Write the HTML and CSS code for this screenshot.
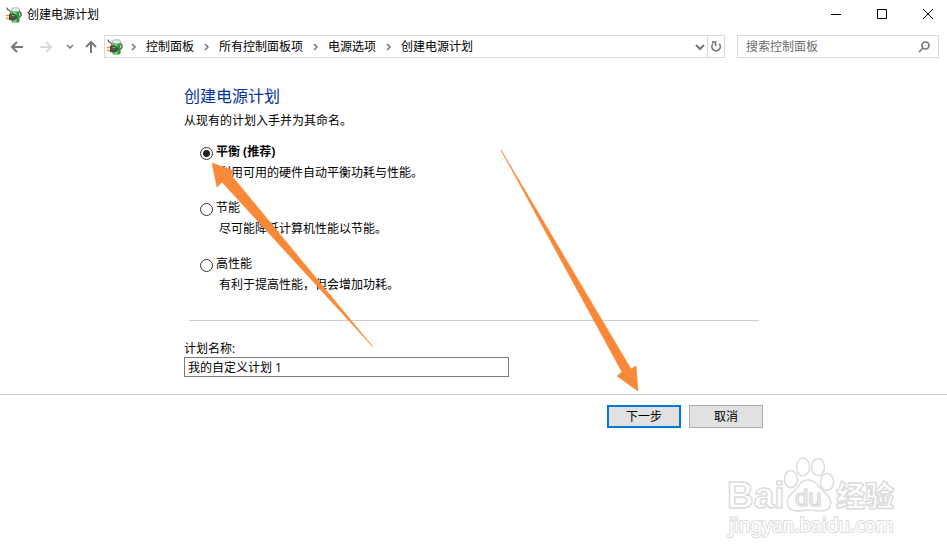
FILE: index.html
```html
<!DOCTYPE html>
<html lang="zh-CN">
<head>
    <meta charset="UTF-8">
    <meta name="viewport" content="width=device-width, initial-scale=1.0">
    <title>创建电源计划</title>
    <link rel="stylesheet" href="styles.css">
</head>
<body>
    <svg class="symbols" aria-hidden="true">
        <symbol id="power" viewBox="0 0 16 16">
            <path d="M1 .5 Q1 3 3.5 3.5 Q5 4.5 5 8" fill="none" stroke="#666" stroke-width="1.2"/>
            <path d="M13 4.5 Q15.5 5 15 8.5 L13 11" fill="none" stroke="#444" stroke-width="1.2"/>
            <rect x="5.5" y="2" width="8" height="13.5" rx="1.5" fill="#2f9a3c"/>
            <rect x="5.5" y=".8" width="8" height="4" rx="2" fill="#e4ebe6" stroke="#8a968e" stroke-width=".6"/>
            <path d="M7 5 H10.5 V15 H7Z" fill="#5ddb62"/>
            <path d="M0 8.5 H4 M0 11.5 H4" stroke="#e3a01b" stroke-width="1.4"/>
            <path d="M3.5 7.2 H6 Q10.5 7 10.5 10 Q10.5 13 6 12.8 H3.5Z" fill="#505050" stroke="#2a2a2a" stroke-width=".7"/>
            <path d="M5.5 8.6 H8.5" stroke="#aaa"/>
        </symbol>
        <symbol id="chevron" viewBox="0 0 7 8">
            <path d="M2 1 L5 4 L2 7" fill="none" stroke="#777" stroke-width="1.5"/>
        </symbol>
    </svg>

    <header class="titlebar">
        <svg class="app-icon"><use href="#power"/></svg>
        <span class="title">创建电源计划</span>
        <div class="window-buttons">
            <button type="button" aria-label="最小化"><svg viewBox="0 0 12 12"><path d="M1 5.5 H11"/></svg></button>
            <button type="button" aria-label="最大化"><svg viewBox="0 0 12 12"><path d="M1.5 .5 H10.5 V9.5 H1.5Z"/></svg></button>
            <button type="button" aria-label="关闭"><svg viewBox="0 0 12 12"><path d="M1 0 L11 10 M11 0 L1 10"/></svg></button>
        </div>
    </header>

    <nav class="toolbar">
        <div class="history">
            <button type="button" aria-label="后退"><svg viewBox="0 0 14 14"><path d="M13 7 H2 M7 2 L2 7 L7 12"/></svg></button>
            <button type="button" class="disabled" aria-label="前进"><svg viewBox="0 0 14 14"><path d="M1 7 H12 M7 2 L12 7 L7 12"/></svg></button>
            <button type="button" class="recent" aria-label="最近位置"><svg viewBox="0 0 8 8"><path d="M1 2 L4 5 L7 2"/></svg></button>
            <button type="button" aria-label="上移"><svg viewBox="0 0 14 14"><path d="M7 13 V2 M2 7 L7 2 L12 7"/></svg></button>
        </div>
        <div class="address">
            <svg class="app-icon"><use href="#power"/></svg>
            <svg class="chevron"><use href="#chevron"/></svg>
            <a href="#">控制面板</a>
            <svg class="chevron"><use href="#chevron"/></svg>
            <a href="#">所有控制面板项</a>
            <svg class="chevron"><use href="#chevron"/></svg>
            <a href="#">电源选项</a>
            <svg class="chevron"><use href="#chevron"/></svg>
            <a href="#">创建电源计划</a>
            <button type="button" class="expand" aria-label="展开"><svg viewBox="0 0 10 10"><path d="M1 3 L5 7 L9 3"/></svg></button>
            <button type="button" class="refresh" aria-label="刷新"><svg viewBox="0 0 12 12"><path d="M9.2 2.8 A4.2 4.2 0 1 1 3 2.8 M2 1.2 H5.6 V5"/></svg></button>
        </div>
        <div class="search">
            <input type="search" placeholder="搜索控制面板" aria-label="搜索控制面板">
            <svg viewBox="0 0 12 12"><circle cx="7.5" cy="4.5" r="3.5"/><path d="M5 7 L1 11"/></svg>
        </div>
    </nav>

    <form>
        <main class="content">
            <h1>创建电源计划</h1>
            <p class="intro">从现有的计划入手并为其命名。</p>

            <div class="plan">
                <input type="radio" name="plan" id="balanced" checked>
                <label for="balanced" class="selected">平衡 (推荐)</label>
                <p>利用可用的硬件自动平衡功耗与性能。</p>
            </div>
            <div class="plan">
                <input type="radio" name="plan" id="saver">
                <label for="saver">节能</label>
                <p>尽可能降低计算机性能以节能。</p>
            </div>
            <div class="plan">
                <input type="radio" name="plan" id="high">
                <label for="high">高性能</label>
                <p>有利于提高性能，但会增加功耗。</p>
            </div>

            <hr>

            <label for="name" class="name-label">计划名称:</label>
            <input type="text" id="name" class="name" value="我的自定义计划 1">
        </main>

        <footer class="actions">
            <button type="submit" class="primary">下一步</button>
            <button type="button">取消</button>
        </footer>
    </form>

    <svg class="arrows" viewBox="0 0 947 559" aria-hidden="true">
        <path d="M212 163 L234 171 L231 175 L373 347 L222 182 L217 187Z"/>
        <path d="M638 391 L617 376 L622 372 L501 150 L631 369 L636 366Z"/>
    </svg>

    <svg class="watermark" viewBox="0 0 180 100" aria-hidden="true">
        <text x="5" y="63" class="brand">Bai</text>
        <ellipse cx="69" cy="34" rx="6.5" ry="8.5"/>
        <ellipse cx="81" cy="22" rx="6.5" ry="9"/>
        <ellipse cx="96" cy="22" rx="6.5" ry="8.5"/>
        <ellipse cx="105" cy="37" rx="6.5" ry="8.5"/>
        <path d="M86 35 C94 35 96 41 101 46 C113 55 110 66 99 66 C93 66 92 65 87 65 C82 65 80 66 75 66 C63 65 63 54 71 47 C77 42 78 35 86 35Z"/>
        <text x="73" y="61" class="du">du</text>
        <text x="114" y="62" class="cn">经验</text>
        <text x="7" y="87" class="site">jingyan.baidu.com</text>
    </svg>
</body>
</html>
```

FILE: styles.css
```css
* {
    box-sizing: border-box;
}
body {
    margin: 0;
    min-height: 100vh;
    background-color: #fff;
    color: #000;
    font-family: "Open Sans", "Noto Sans CJK SC", sans-serif;
    font-size: 12px;
    line-height: 16px;
    position: relative;
}
button, input {
    font: inherit;
    color: inherit;
    margin: 0;
    padding: 0;
}
h1, p {
    margin: 0;
    font-weight: normal;
}
svg {
    display: block;
    flex: none;
}
.symbols {
    position: absolute;
    width: 0;
    height: 0;
}
.app-icon {
    width: 16px;
    height: 16px;
}

/* Title bar */
.titlebar {
    display: flex;
    align-items: center;
    height: 29px;
    padding-left: 6px;
}
.title {
    margin-left: 5px;
}
.window-buttons {
    display: flex;
    margin-left: auto;
}
.window-buttons button {
    width: 46px;
    height: 29px;
    display: flex;
    align-items: center;
    justify-content: center;
    border: none;
    background: none;
}
.window-buttons button:last-child {
    width: 38px;
    margin-left: 4px;
}
.window-buttons svg {
    width: 12px;
    height: 12px;
    fill: none;
    stroke: #000;
}

/* Toolbar */
.toolbar {
    display: flex;
    align-items: center;
    padding: 6px 8px 0 10px;
}
.history {
    display: flex;
    align-items: center;
    width: 94px;
    gap: 15px;
}
.history button, .address button {
    border: none;
    background: none;
}
.toolbar svg {
    fill: none;
    stroke: #777;
    stroke-width: 2;
}
.toolbar .app-icon, .toolbar .chevron {
    stroke: none;
    stroke-width: 1;
}
.history svg {
    width: 14px;
    height: 14px;
}
.history .disabled svg {
    stroke: #d9d9d9;
}
.history .recent {
    margin: 0 -5px 0 -2px;
}
.history .recent svg {
    width: 8px;
    height: 8px;
    stroke-width: 1.5;
}
.address {
    flex: 1;
    display: flex;
    align-items: center;
    height: 23px;
    padding-left: 2px;
    border: 1px solid #d9d9d9;
}
.address a {
    color: #000;
    text-decoration: none;
}
.chevron {
    width: 7px;
    height: 8px;
    margin: 0 9px;
}
.app-icon + .chevron {
    margin-left: 7px;
}
.address .expand {
    margin-left: auto;
    padding: 0 2px;
}
.address .expand svg {
    width: 10px;
    height: 10px;
}
.address .refresh {
    height: 21px;
    padding: 0 2px;
    border-left: 1px solid #d9d9d9;
}
.address .refresh svg {
    width: 12px;
    height: 12px;
    stroke-width: 1.7;
}
.search {
    display: flex;
    align-items: center;
    width: 202px;
    height: 23px;
    margin-left: 12px;
    padding: 0 8px;
    border: 1px solid #d9d9d9;
}
.search input {
    flex: 1;
    min-width: 0;
    border: none;
    outline: none;
    background: none;
}
.search input::placeholder {
    color: #6d6d6d;
}
.search svg {
    width: 12px;
    height: 12px;
    stroke-width: 1.7;
}

/* Wizard page */
.content {
    padding: 26px 184px 17px;
}
h1 {
    color: #003399;
    font-size: 16px;
    line-height: 24px;
}
.intro {
    margin: 5px 0 15px;
}
.plan {
    display: grid;
    grid-template-columns: 13px 1fr;
    column-gap: 3px;
    row-gap: 5px;
    align-items: center;
    margin: 0 0 19px 16px;
}
.plan input {
    appearance: none;
    width: 13px;
    height: 13px;
    margin-top: 3px;
    border: 1px solid #333;
    border-radius: 50%;
    background-color: #fff;
}
.plan input:checked {
    background-image: radial-gradient(circle, #222 3px, transparent 4px);
}
.plan .selected {
    font-weight: bold;
}
.plan p {
    grid-column: 2;
    padding-left: 3px;
}
hr {
    width: 570px;
    margin: 27px 0 20px 5px;
    border: none;
    border-top: 1px solid #ccc;
}
.name-label {
    display: block;
}
.name {
    display: block;
    width: 325px;
    height: 20px;
    padding: 0 3px;
    border: 1px solid #7a7a7a;
}
.actions {
    display: flex;
    justify-content: flex-end;
    gap: 8px;
    padding: 10px 184px 0 0;
    border-top: 1px solid #ccc;
}
.actions button {
    width: 74px;
    height: 23px;
    border: 1px solid #adadad;
    background-color: #e1e1e1;
}
.actions .primary {
    border: 2px solid #0078d7;
}

/* Pointers and mark drawn over the page */
.arrows {
    position: absolute;
    top: 0;
    left: 0;
    width: 947px;
    height: 559px;
    pointer-events: none;
    fill: #f98838;
    stroke: #f98838;
    stroke-width: .6;
}
.watermark {
    position: absolute;
    top: 445px;
    left: 722px;
    width: 180px;
    height: 100px;
    pointer-events: none;
    fill: #fff;
    stroke: #dcdcdc;
    stroke-width: 1.5;
    stroke-linejoin: round;
}
.brand {
    font: bold 37px "Liberation Sans", sans-serif;
}
.du {
    font: 24px "Liberation Sans", sans-serif;
}
.cn {
    font: 900 29px "Noto Sans CJK SC", sans-serif;
}
.site {
    font: 19px "Noto Sans", sans-serif;
    paint-order: stroke;
    stroke-width: 2;
}
```
